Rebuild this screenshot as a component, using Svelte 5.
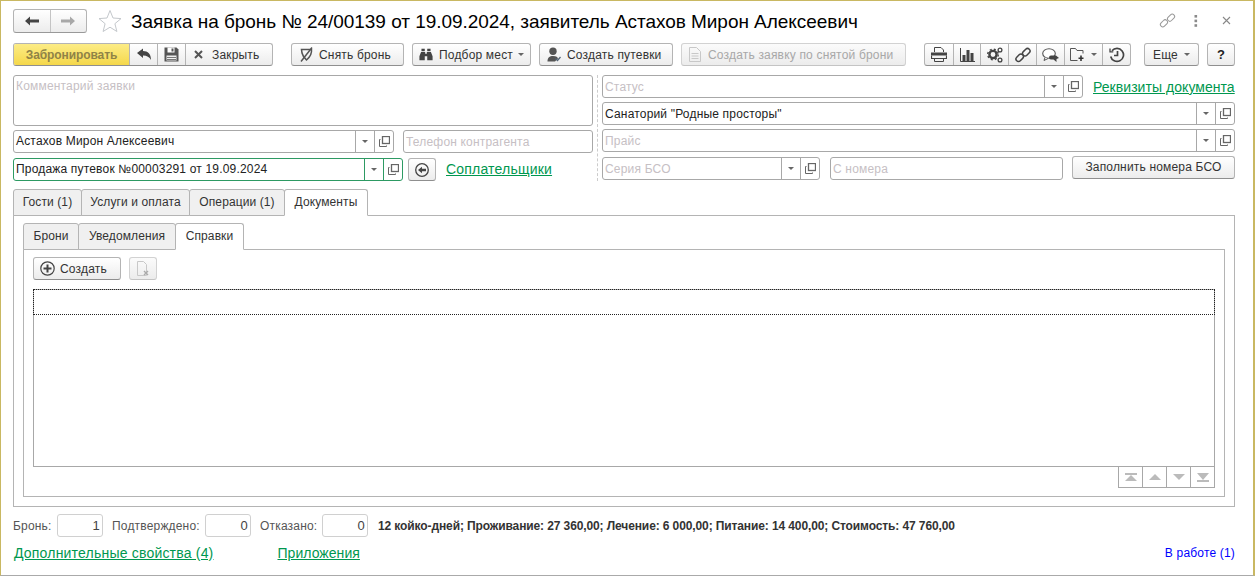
<script>
  const tabs = ['Гости (1)', 'Услуги и оплата', 'Операции (1)'];
  const tabW = [69, 109, 96];
</script>

{#snippet open()}
  <span class="ib open"><svg width="11" height="11" viewBox="0 0 11 11" fill="none" stroke="#666"><rect x="3.500" y="0.500" width="7" height="7" stroke-width="1.300"/><path d="M1.500 3.500H.5v7h7V9.500"/></svg></span>
{/snippet}
{#snippet arrow()}
  <span class="ib drop"><i class="tri"></i></span>
{/snippet}

<div class="win">
  <header class="head">
    <div class="nav">
      <span class="nb"><svg width="16" height="12" viewBox="0 0 16 12"><path d="M1 6l5-4.500V4.500h9v3H6v3z" fill="#444"/></svg></span>
      <span class="nb last"><svg width="16" height="12" viewBox="0 0 16 12"><path d="M15 6l-5-4.500V4.500H1v3h9v3z" fill="#a8a8a8"/></svg></span>
    </div>
    <svg class="star" width="24" height="24" viewBox="0 0 24 24"><path d="M12 1.500l3 7.500 8 .6-6.100 5.100 2 7.800L12 18.200 5.100 22.500l2-7.800L1 9.600 9 9z" fill="#fff" stroke="#c4c8cc"/></svg>
    <h1>Заявка на бронь № 24/00139 от 19.09.2024, заявитель Астахов Мирон Алексеевич</h1>
    <div class="winbtns">
      <svg class="wlink" width="17" height="17" viewBox="0 0 18 18" fill="none" stroke="#999" stroke-width="1.100"><rect x="1" y="9.500" width="8.500" height="5" rx="2.500" transform="rotate(-45 5.250 12)"/><rect x="8.500" y="3.500" width="8.500" height="5" rx="2.500" transform="rotate(-45 12.750 6)"/></svg>
      <svg class="wdots" width="4" height="12" viewBox="0 0 4 12" fill="#8a8a8a"><rect x="0.500" y="0" width="2.600" height="2.600"/><rect x="0.500" y="4.600" width="2.600" height="2.600"/><rect x="0.500" y="9.200" width="2.600" height="2.600"/></svg>
      <svg class="wx" width="9" height="9" viewBox="0 0 9 9" stroke="#888" stroke-width="1.100"><path d="M1 1l7 7M8 1l-7 7"/></svg>
    </div>
  </header>

  <div class="bar">
    <div class="grp g1">
      <button class="yellow">Забронировать</button>
      <button class="sq"><svg width="16" height="14" viewBox="0 0 16 14"><path d="M1 5l6-4.500V3c5 0 8 3 8 9-1.500-3-4-4.500-8-4.500V10z" fill="#444"/></svg></button>
      <button class="sq"><svg width="15" height="15" viewBox="0 0 15 15"><path d="M0.500 0.500h12l2 2v12H.5z" fill="#555"/><rect x="3.500" y="0.500" width="7" height="5" fill="#fff"/><rect x="7.500" y="1.500" width="2" height="3" fill="#555"/><rect x="2.500" y="8.500" width="10" height="5" fill="#eee"/><path d="M3 10.500h9M3 12.500h9" stroke="#777"/></svg></button>
      <button class="wclose"><svg width="9" height="9" viewBox="0 0 9 9" stroke="#555" stroke-width="2"><path d="M1 1l7 7M8 1l-7 7"/></svg><span>Закрыть</span></button>
    </div>
    <button class="btn lft w113 ml18 p8"><svg width="13" height="15" viewBox="0 0 13 15" fill="none" stroke="#555" stroke-width="1.500"><path d="M1.500 2.500h10c.5 4-1 7-5 10.500-2.500-2.500-4-4.500-4.500-7z"/><path d="M1 14.500L12 .5"/></svg><span>Снять бронь</span></button>
    <button class="btn lft w119 ml8 p6"><svg width="14" height="13" viewBox="0 0 17 15" fill="#444"><rect x="3" y="0.500" width="4" height="3"/><rect x="10" y="0.500" width="4" height="3"/><path d="M2.500 4.500h5v2h2v-2h5l2 5v5h-6.500v-5h-3v5H.5v-5z"/></svg><span>Подбор мест</span><i class="tri"></i></button>
    <button class="btn lft w134 ml8 p7"><svg width="14" height="15" viewBox="0 0 14 15"><circle cx="6" cy="4.200" r="3.700" fill="#555"/><path d="M0.500 14.500c0-4 2-5.500 5.500-5.500s4.500 1 5 2.500l-3 3z" fill="#555"/><path d="M8.500 11.500l2 2 3-3.500" fill="none" stroke="#567" stroke-width="1.300"/></svg><span>Создать путевки</span></button>
    <button class="btn lft dis w225 ml8 p7"><svg width="12" height="15" viewBox="0 0 12 15" fill="none" stroke="#c8c8c8"><path d="M.5.5h7l4 4v10H.5zM2.500 6.500h7M2.500 9h7M2.500 11.500h7"/></svg><span class="g2x">Создать заявку по снятой брони</span></button>
    <div class="grp g2 ml18">
      <button class="ic w29"><svg width="16" height="15" viewBox="0 0 16 15" fill="none" stroke="#444"><path d="M3.500 5V.5h6.500L12.500 3v2"/><rect x="0" y="5.500" width="16" height="3" fill="#444" stroke="none"/><path d="M.5 8.500v3h15v-3" stroke-width="1.200"/><path d="M3.500 11v3.500h9V11"/></svg></button>
      <button class="ic w28"><svg width="15" height="14" viewBox="0 0 15 14" fill="#444"><path d="M.5 0v13.500H15" fill="none" stroke="#444"/><rect x="2.500" y="7" width="3" height="6"/><rect x="6.500" y="2" width="3" height="11"/><rect x="10.500" y="5" width="3" height="8"/></svg></button>
      <button class="ic w28"><svg width="16" height="16" viewBox="0 0 16 16" fill="none" stroke="#444"><circle cx="6" cy="7.500" r="3.600" stroke-width="2.400"/><circle cx="6" cy="7.500" r="5.300" stroke-width="1.400" stroke-dasharray="2 2.200"/><circle cx="13" cy="3" r="1.900" stroke-width="1.300"/><circle cx="13" cy="13" r="1.900" stroke-width="1.300"/></svg></button>
      <button class="ic w28"><svg width="16" height="16" viewBox="0 0 16 16" fill="none" stroke="#444" stroke-width="1.500"><rect x="0.500" y="8.300" width="8.400" height="5" rx="2.500" transform="rotate(-45 4.700 10.800)"/><rect x="7.100" y="2.700" width="8.400" height="5" rx="2.500" transform="rotate(-45 11.300 5.200)"/></svg></button>
      <button class="ic w28"><svg width="17" height="14" viewBox="0 0 17 14"><ellipse cx="7" cy="5.500" rx="6.300" ry="4.800" fill="#fff" stroke="#555" stroke-width="1.100"/><path d="M3 9.500l-1 3 4-2" fill="#fff" stroke="#555"/><path d="M9 7.500h5l3 2.500-2.500 1v3l-3-2.500H9a2 2 0 0 1 0-4z" fill="#444"/></svg></button>
      <button class="ic w39"><svg width="15" height="13" viewBox="0 0 15 13" fill="none" stroke="#555"><path d="M.5 12.500V.5h5l1.500 2h6v3"/><path d="M.5 12.500h7"/><path d="M11 7.500v5.500M8.500 10.200h5" stroke="#333" stroke-width="1.600"/></svg><i class="tri"></i></button>
      <button class="ic w27"><svg width="16" height="16" viewBox="0 0 16 16" fill="none" stroke="#444" stroke-width="1.700"><path d="M1.700 9.500A6.500 6.500 0 1 0 3 3.800"/><path d="M1 1.500v3.300h3.300" stroke-width="1.300"/><path d="M8.500 4v4.500H5"/></svg></button>
    </div>
    <button class="btn w55 ml13 more"><span>Еще</span><i class="tri"></i></button>
    <button class="btn w28 ml8 help">?</button>
  </div>

  <div class="form">
    <div class="col">
      <div class="field area"><span class="ph">Комментарий заявки</span></div>
      <div class="row g9 m4">
        <div class="field w381"><span class="val">Астахов Мирон Алексеевич</span>{@render arrow()}{@render open()}</div>
        <div class="field grow"><span class="ph">Телефон контрагента</span></div>
      </div>
      <div class="row m5">
        <div class="field w390 active"><span class="val">Продажа путевок №00003291 от 19.09.2024</span>{@render arrow()}{@render open()}</div>
        <button class="btn back"><svg width="14" height="14" viewBox="0 0 14 14" fill="none" stroke="#444"><circle cx="7" cy="7" r="6.300" stroke-width="1.300"/><path d="M3 7l4-3.200v2h4v2.400H7v2z" fill="#444" stroke="none"/></svg></button>
        <a class="link coll" href="#a">Соплательщики</a>
      </div>
    </div>
    <div class="sep"></div>
    <div class="col rightcol">
      <div class="row">
        <div class="field w481"><span class="ph">Статус</span>{@render arrow()}{@render open()}</div>
        <a class="link req" href="#a">Реквизиты документа</a>
      </div>
      <div class="field full m4"><span class="val">Санаторий "Родные просторы"</span>{@render arrow()}{@render open()}</div>
      <div class="field full m4"><span class="ph">Прайс</span>{@render arrow()}{@render open()}</div>
      <div class="row m5 lastrow">
        <div class="field w218"><span class="ph">Серия БСО</span>{@render arrow()}{@render open()}</div>
        <div class="field w233"><span class="ph">С номера</span></div>
        <button class="btn fill">Заполнить номера БСО</button>
      </div>
    </div>
  </div>

  <div class="tabbar outer">
    {#each tabs as t, i}<span class="tab" style="width:{tabW[i]}px">{t}</span>{/each}
    <span class="tab on w84">Документы</span>
  </div>
  <section class="panel">
    <div class="tabbar innerbar">
      <span class="tab w56">Брони</span><span class="tab w98">Уведомления</span><span class="tab on w69">Справки</span>
    </div>
    <div class="panel2">
      <div class="tools">
        <button class="btn lft create"><svg width="15" height="15" viewBox="0 0 15 15" fill="none" stroke="#444"><circle cx="7.500" cy="7.500" r="6.700" stroke-width="1.200"/><path d="M7.500 3.500v8M3.500 7.500h8" stroke-width="2"/></svg><span>Создать</span></button>
        <button class="btn dis delbtn"><svg width="14" height="16" viewBox="0 0 14 16" fill="none" stroke="#c8c8c8"><path d="M1.500.5h6l3 3v11h-9z"/><path d="M8 10l4 4M12 10l-4 4" stroke="#aaa" stroke-width="1.400"/></svg></button>
      </div>
      <div class="table"><div class="cur"></div></div>
      <div class="pager">
        <span><svg width="12" height="9" viewBox="0 0 12 9" fill="#bbb"><rect width="12" height="2"/><path d="M6 2l6 6H0z"/></svg></span>
        <span><svg width="12" height="6" viewBox="0 0 12 6" fill="#bbb"><path d="M6 0l6 6H0z"/></svg></span>
        <span><svg width="12" height="6" viewBox="0 0 12 6" fill="#bbb"><path d="M6 6L0 0h12z"/></svg></span>
        <span><svg width="12" height="9" viewBox="0 0 12 9" fill="#bbb"><rect y="7" width="12" height="2"/><path d="M6 7L0 0h12z"/></svg></span>
      </div>
    </div>
  </section>

  <div class="totals">
    <span class="lbl w44">Бронь:</span><span class="num">1</span>
    <span class="lbl w93 ml9">Подтверждено:</span><span class="num">0</span>
    <span class="lbl w62 ml9">Отказано:</span><span class="num">0</span>
    <b>12 койко-дней; Проживание: 27 360,00; Лечение: 6 000,00; Питание: 14 400,00; Стоимость: 47 760,00</b>
  </div>
  <div class="links">
    <a class="link addl" href="#a">Дополнительные свойства (4)</a>
    <a class="link app" href="#a">Приложения</a>
    <a class="work" href="#a">В работе (1)</a>
  </div>
</div>

<style>
  :global(body) { margin: 0; background: #fff; }
  * { box-sizing: border-box; }
  .win {
    width: 1255px; height: 576px; overflow: hidden; position: relative;
    border-top: 1px solid #c9b862; border-left: 1px solid #c9b862; border-right: 2px solid #c9b862; border-bottom: 1px solid #aaa;
    padding: 0 18px 0 12px;
    font: 12px "Liberation Sans", Arial, sans-serif; letter-spacing: .18px; color: #333; background: #fff;
  }
  button { font: inherit; letter-spacing: inherit; padding: 0; margin: 0; color: #333; }
  .head { height: 42px; display: flex; align-items: flex-start; padding-top: 8px; }
  .nav { display: flex; width: 74px; height: 24px; border: 1px solid #b4b4b4; border-bottom-color: #999; border-radius: 3px; background: linear-gradient(#fff, #ececec); }
  .nb { flex: 1; display: flex; align-items: center; justify-content: center; border-right: 1px solid #c4c4c4; }
  .nb.last { border-right: 0; }
  .star { margin: 0 0 0 11px; }
  h1 { margin: 2px 0 0 9px; font-size: 19px; letter-spacing: -.04px; font-weight: 400; line-height: 22px; color: #000; white-space: nowrap; }
  .winbtns { margin-left: auto; margin-right: 4px; padding-top: 3px; display: flex; align-items: center; height: 20px; }
  .wdots { margin-left: 18px; }
  .wx { margin-left: 24px; }

  .bar { display: flex; align-items: flex-start; height: 23px; }
  .grp { display: flex; height: 23px; border: 1px solid #b4b4b4; border-bottom-color: #8f8f8f; border-radius: 3px; background: linear-gradient(#fff, #ececec); overflow: hidden; }
  .grp button { border: 0; border-right: 1px solid #b4b4b4; background: none; height: 100%; display: flex; align-items: center; justify-content: center; }
  .grp button:last-child { border-right: 0; }
  .g1 { width: 260px; }
  .yellow { width: 116px; background: linear-gradient(#fcec86, #f5d84b) !important; color: #8f8347; font-weight: 700; letter-spacing: -.1px; }
  .sq { width: 28px; }
  .wclose { flex: 1; gap: 9px; justify-content: flex-start !important; padding-left: 8px !important; }
  .g2 { width: 207px; }
  .ic { gap: 6px; }
  .w29 { width: 29px; } .w28 { width: 28px; } .w39 { width: 39px; } .w27 { width: 27px; }
  .btn { height: 23px; border: 1px solid #b4b4b4; border-bottom-color: #8f8f8f; border-radius: 3px; background: linear-gradient(#fff, #ececec); display: flex; align-items: center; justify-content: center; gap: 6px; white-space: nowrap; }
  .lft { justify-content: flex-start; }
  .p8 { padding-left: 8px; } .p6 { padding-left: 6px; } .p7 { padding-left: 7px; }
  .g2x { margin-left: 1px; }
  .dis { color: #a8a8a8; border-color: #d2d2d2; border-bottom-color: #c4c4c4; background: linear-gradient(#fbfbfb, #ececec); }
  .w113 { width: 113px; } .w119 { width: 119px; } .w134 { width: 134px; } .w225 { width: 225px; } .w55 { width: 55px; }
  .ml18 { margin-left: 18px; } .ml8 { margin-left: 8px; } .ml13 { margin-left: 13px; } .ml9 { margin-left: 9px; }
  .help { font-weight: 700; color: #222; font-size: 13px; }
  .tri { display: inline-block; width: 0; height: 0; border: 3px solid transparent; border-top: 3px solid #666; border-bottom: 0; }
  .w119 .tri { margin-left: -1px; }

  .form { display: grid; grid-template-columns: 580px 9px 633px; margin-top: 9px; height: 106px; }
  .col { display: flex; flex-direction: column; }
  .sep { margin: 0 4px; border-left: 1px dashed #ccc; width: 1px; }
  .row { display: flex; align-items: center; height: 23px; }
  .g9 { gap: 9px; } .m4 { margin-top: 4px; } .m5 { margin-top: 5px; }
  .field { height: 23px; display: flex; align-items: stretch; background: #fff; border: 1px solid #a8a8a8; border-radius: 3px; }
  .field > span:first-child { flex: 1; line-height: 21px; padding-left: 2px; white-space: nowrap; overflow: hidden; }
  .rightcol .field > span:first-child, .grow > span:first-child { line-height: 23px; }
  .ph { color: #c6c0c4; }
  .val { color: #222; }
  .area { height: 51px; }
  .field.area .ph { line-height: 20px; }
  .ib { width: 19px; display: flex; align-items: center; justify-content: center; border-left: 1px solid #a8a8a8; }
  .w381 { width: 381px; } .grow { flex: 1; } .w390 { width: 390px; }
  .active { border-color: #2d9a63; }
  .active .ib { border-left-color: #2d9a63; }
  .back { width: 28px; margin-left: 5px; }
  .link { color: #00974f; font-size: 14px; letter-spacing: .2px; text-decoration: underline; white-space: nowrap; }
  .coll { margin-left: 10px; margin-top: -2px; }
  .w481 { width: 481px; }
  .req { margin-left: 10px; letter-spacing: .05px; }
  .app { letter-spacing: .05px; }
  .full { width: 633px; }
  .lastrow { margin-top: 5px; }
  .w218 { width: 218px; } .w233 { width: 233px; margin-left: 10px; }
  .fill { width: 163px; margin-left: 9px; margin-top: -3px; }

  .tabbar { display: flex; height: 27px; align-items: flex-start; }
  .outer { margin-top: 8px; position: relative; z-index: 1; }
  .tab { height: 27px; line-height: 25px; text-align: center; border: 1px solid #b4b4b4; margin-left: -1px; border-radius: 3px 3px 0 0; background: #f0f0f0; white-space: nowrap; letter-spacing: .1px; }
  .tabbar .tab:first-child { margin-left: 0; }
  .tab.on { background: #fff; border-bottom-color: #fff; }
  .w84 { width: 84px; } .w56 { width: 56px; } .w98 { width: 98px; } .w69 { width: 69px; }
  .panel { margin-top: -1px; height: 292px; border: 1px solid #b4b4b4; padding: 7px 9px 9px; }
  .innerbar { position: relative; z-index: 1; }
  .panel2 { margin-top: -1px; height: 248px; border: 1px solid #b4b4b4; padding: 7px 9px 0; }
  .tools { display: flex; gap: 8px; }
  .create { width: 88px; gap: 5px; padding-left: 6px; }
  .delbtn { width: 28px; }
  .table { margin-top: 9px; height: 178px; border: 1px solid #a8a8a8; }
  .cur { height: 26px; margin: -1px; border: 1px dotted #222; }
  .pager { display: flex; width: 97px; height: 21px; margin-left: auto; border: 1px solid #a8a8a8; border-top: 0; }
  .pager span { flex: 1; display: flex; align-items: center; justify-content: center; border-left: 1px solid #a8a8a8; }
  .pager span:first-child { border-left: 0; }

  .totals { display: flex; align-items: center; height: 23px; margin-top: 7px; }
  .lbl { color: #555; white-space: nowrap; }
  .w44 { width: 44px; } .w93 { width: 93px; } .w62 { width: 62px; }
  .num { width: 46px; height: 23px; border: 1px solid #d0d0d0; border-radius: 3px; text-align: right; padding-right: 2px; line-height: 21px; font-size: 13px; color: #444; }
  .totals b { margin-left: 10px; color: #333; white-space: nowrap; letter-spacing: -.11px; }
  .links { display: flex; align-items: center; margin-top: 6px; height: 20px; padding-left: 1px; }
  .addl { margin-right: 64px; }
  .work { margin-left: auto; color: #0000ff; text-decoration: none; }
</style>
